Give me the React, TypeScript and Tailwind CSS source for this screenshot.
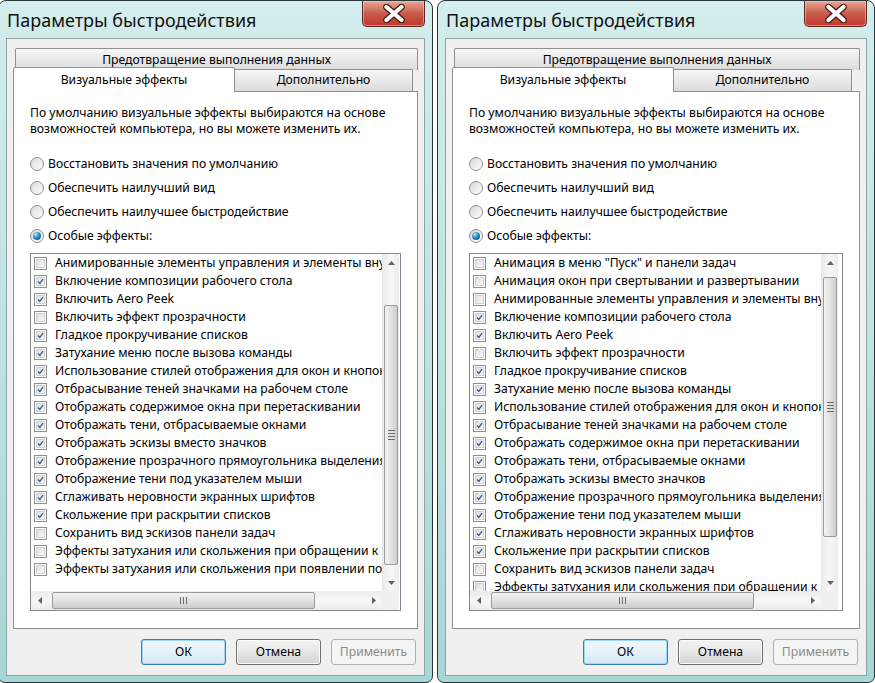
import React from "react";

type Item = [string, boolean];

const LEFT_ITEMS: Item[] = [
  ["Анимированные элементы управления и элементы внутри окна", false],
  ["Включение композиции рабочего стола", true],
  ["Включить Aero Peek", true],
  ["Включить эффект прозрачности", false],
  ["Гладкое прокручивание списков", true],
  ["Затухание меню после вызова команды", true],
  ["Использование стилей отображения для окон и кнопок", true],
  ["Отбрасывание теней значками на рабочем столе", true],
  ["Отображать содержимое окна при перетаскивании", true],
  ["Отображать тени, отбрасываемые окнами", true],
  ["Отображать эскизы вместо значков", true],
  ["Отображение прозрачного прямоугольника выделения", true],
  ["Отображение тени под указателем мыши", true],
  ["Сглаживать неровности экранных шрифтов", true],
  ["Скольжение при раскрытии списков", true],
  ["Сохранить вид эскизов панели задач", false],
  ["Эффекты затухания или скольжения при обращении к меню", false],
  ["Эффекты затухания или скольжения при появлении подсказок", false],
];

// the right dialog is scrolled to the top, so two more rows show up first
const RIGHT_ITEMS: Item[] = [
  ['Анимация в меню "Пуск" и панели задач', false],
  ["Анимация окон при свертывании и развертывании", false],
  ...LEFT_ITEMS,
];

const RADIOS = [
  "Восстановить значения по умолчанию",
  "Обеспечить наилучший вид",
  "Обеспечить наилучшее быстродействие",
  "Особые эффекты:",
];

function CheckBox({ checked }: { checked: boolean }) {
  return (
    <span className="flex h-[13px] w-[13px] shrink-0 items-center justify-center border border-[#8f8f8f] bg-white p-px">
      <span className="flex h-full w-full items-center justify-center border border-[#cfd1d3] bg-gradient-to-br from-[#dedede] to-[#fafafa]">
        {checked && (
          <svg width="9" height="9" viewBox="0 0 9 9">
            <path d="M1.3 4.6 L3.6 7 L7.8 1.4" fill="none" stroke="#3a5c9a" strokeWidth="1.7" />
          </svg>
        )}
      </span>
    </span>
  );
}

function Radio({ checked }: { checked: boolean }) {
  return (
    <span className="flex h-[14px] w-[14px] shrink-0 items-center justify-center rounded-full border border-[#8f8f8f] bg-gradient-to-br from-[#d6d6d6] via-[#ececec] to-[#fdfdfd]">
      {checked && (
        <span className="h-[8px] w-[8px] rounded-full bg-[radial-gradient(circle_at_35%_30%,#b8ecff,#2a8ac8_45%,#0b3f6a)]" />
      )}
    </span>
  );
}

function Tri({ dir }: { dir: "up" | "down" | "left" | "right" }) {
  const d = {
    up: "M0 4 L3.5 0 L7 4 Z",
    down: "M0 0 L7 0 L3.5 4 Z",
    left: "M4 0 L4 7 L0 3.5 Z",
    right: "M0 0 L4 3.5 L0 7 Z",
  }[dir];
  const vertical = dir === "up" || dir === "down";
  return (
    <svg width={vertical ? 7 : 4} height={vertical ? 4 : 7} viewBox={vertical ? "0 0 7 4" : "0 0 4 7"}>
      <path d={d} fill="#606060" />
    </svg>
  );
}

function ItemList({ items, thumbTop }: { items: Item[]; thumbTop: number }) {
  return (
    <div className="mt-[5px] grid h-[358px] grid-cols-[351px_17px] grid-rows-[337px_19px] border border-[#828790] bg-white">
      <div className="overflow-hidden">
        {items.map(([label, checked], i) => (
          <div key={i} className="flex h-[18px] items-center gap-[8px] whitespace-nowrap pl-[3px]">
            <CheckBox checked={checked} />
            <span>{label}</span>
          </div>
        ))}
      </div>
      <div className="flex flex-col border-l border-[#e8e8e8] bg-gradient-to-r from-[#ececec] via-[#f7f7f7] to-[#ececec]">
        <div className="flex h-[17px] shrink-0 items-center justify-center">
          <Tri dir="up" />
        </div>
        <div className="shrink-0" style={{ height: thumbTop }} />
        <div className="mx-px flex h-[260px] shrink-0 items-center justify-center rounded-[2px] border border-[#9a9a9a] bg-gradient-to-r from-[#f2f2f2] via-[#e2e2e2] to-[#cdcdcd]">
          <div className="flex flex-col gap-[2px]">
            <div className="h-px w-[7px] bg-[#6d6d6d]" />
            <div className="h-px w-[7px] bg-[#6d6d6d]" />
            <div className="h-px w-[7px] bg-[#6d6d6d]" />
            <div className="h-px w-[7px] bg-[#6d6d6d]" />
          </div>
        </div>
        <div className="flex-1" />
        <div className="flex h-[17px] shrink-0 items-center justify-center">
          <Tri dir="down" />
        </div>
      </div>
      <div className="flex items-center bg-gradient-to-b from-[#ececec] via-[#f7f7f7] to-[#ececec]">
        <div className="flex h-full w-[17px] shrink-0 items-center justify-center">
          <Tri dir="left" />
        </div>
        <div className="w-[4px] shrink-0" />
        <div className="flex h-[17px] w-[263px] shrink-0 items-center justify-center rounded-[2px] border border-[#9a9a9a] bg-gradient-to-b from-[#f2f2f2] via-[#e2e2e2] to-[#cdcdcd]">
          <div className="flex gap-[2px]">
            <div className="h-[7px] w-px bg-[#6d6d6d]" />
            <div className="h-[7px] w-px bg-[#6d6d6d]" />
            <div className="h-[7px] w-px bg-[#6d6d6d]" />
          </div>
        </div>
        <div className="flex-1" />
        <div className="flex h-full w-[17px] shrink-0 items-center justify-center">
          <Tri dir="right" />
        </div>
      </div>
      <div className="bg-[#f0f0f0]" />
    </div>
  );
}

function CloseButton() {
  return (
    <div className="flex h-[26px] w-[63px] items-center justify-center rounded-b-[5px] border border-t-0 border-[#5e2622] bg-gradient-to-b from-[#e6a796] via-[#c95b4a] to-[#c0362a] shadow-[inset_0_0_0_1px_rgba(255,210,200,0.5)]">
      <svg width="24" height="19" viewBox="0 0 24 19">
        <path d="M4.5 3 L19.5 16 M19.5 3 L4.5 16" stroke="#3b1512" strokeWidth="6.5" strokeLinecap="round" />
        <path d="M4.5 3 L19.5 16 M19.5 3 L4.5 16" stroke="#ffffff" strokeWidth="4.3" strokeLinecap="round" />
      </svg>
    </div>
  );
}

function Button({ label, variant }: { label: string; variant: "default" | "normal" | "disabled" }) {
  const cls =
    variant === "default"
      ? "border-[#3c7fb1] bg-gradient-to-b from-[#f2f8fc] via-[#e6f1f9] to-[#d3e6f3] text-black shadow-[inset_0_0_0_1px_#9fd6f8]"
      : variant === "normal"
        ? "border-[#707070] bg-gradient-to-b from-[#f4f4f4] via-[#e6e6e6] to-[#d2d2d2] text-black shadow-[inset_0_0_0_1px_#fcfcfc]"
        : "border-[#adb2b5] bg-[#f4f4f4] text-[#8a8a8a]";
  return (
    <div className={`flex h-[26px] w-[85px] items-center justify-center rounded-[3px] border ${cls}`}>
      {label}
    </div>
  );
}

function Dialog({ items, thumbTop, className }: { items: Item[]; thumbTop: number; className: string }) {
  return (
    <div
      className={`flex h-[683px] shrink-0 flex-col rounded-t-[8px] rounded-b-[7px] border border-[#27363a] bg-gradient-to-b from-[#d4eded] via-[#bfe2e2] to-[#a8d5d5] px-[7px] pb-[6px] ${className}`}
    >
      <div className="flex h-[37px] shrink-0 items-start justify-between">
        <span className="pl-[1px] pt-[6px] font-['Noto_Sans',sans-serif] text-[18px] leading-[26px] text-[#111]">
          Параметры быстродействия
        </span>
        <CloseButton />
      </div>
      <div className="flex flex-1 flex-col border border-[#8ea5a8] bg-[#f0f0f0] px-[6px] pt-[9px] font-['Noto_Sans',sans-serif] text-[12.2px] text-black">
        <div className="ml-[2px] flex h-[22px] shrink-0 items-start justify-center rounded-t-[2px] border border-b-0 border-[#8e8f8f] bg-gradient-to-b from-[#f6f6f6] to-[#dcdcdc] pt-[2px]">
          Предотвращение выполнения данных
        </div>
        <div className="-mt-[3px] flex h-[24px] shrink-0 items-end">
          <div className="relative z-10 -mb-px flex h-[25px] w-[222px] items-start justify-center rounded-t-[2px] border border-b-0 border-[#8e8f8f] bg-white pt-[3px]">
            Визуальные эффекты
          </div>
          <div className="flex h-[22px] w-[178px] items-center justify-center rounded-tr-[2px] border border-b-0 border-l-0 border-[#8e8f8f] bg-gradient-to-b from-[#f6f6f6] to-[#dcdcdc]">
            Дополнительно
          </div>
        </div>
        <div className="flex h-[538px] shrink-0 flex-col border border-[#8e8f8f] bg-white px-[16px] pt-[13px]">
          <p className="leading-[16px]">
            По умолчанию визуальные эффекты выбираются на основе
            <br />
            возможностей компьютера, но вы можете изменить их.
          </p>
          <div className="mt-[15px] flex flex-col">
            {RADIOS.map((r, i) => (
              <div key={r} className="flex h-[24px] items-center gap-[4px]">
                <Radio checked={i === 3} />
                <span>{r}</span>
              </div>
            ))}
          </div>
          <ItemList items={items} thumbTop={thumbTop} />
        </div>
        <div className="mt-[10px] flex justify-end gap-[10px] pr-[2px]">
          <Button label="ОК" variant="default" />
          <Button label="Отмена" variant="normal" />
          <Button label="Применить" variant="disabled" />
        </div>
      </div>
    </div>
  );
}

export default function App() {
  return (
    <div className="flex h-[683px] w-[875px] gap-[4px] overflow-hidden bg-white">
      <Dialog items={LEFT_ITEMS} thumbTop={34} className="-ml-[2px] w-[435px]" />
      <Dialog items={RIGHT_ITEMS} thumbTop={6} className="w-[438px]" />
    </div>
  );
}
